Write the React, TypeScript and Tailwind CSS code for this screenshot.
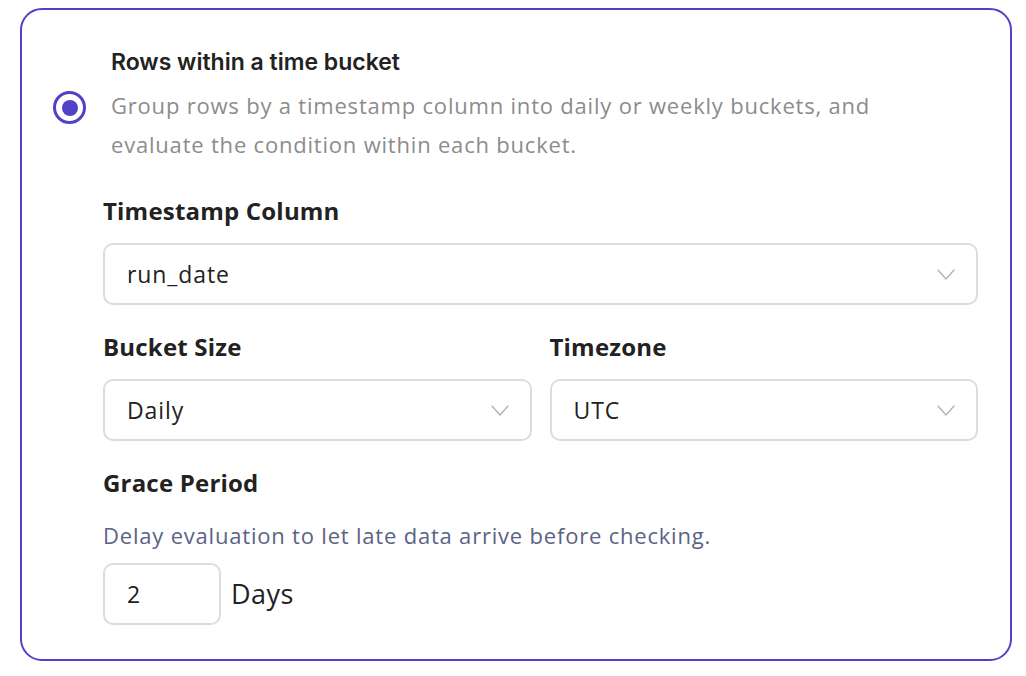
import { useState } from 'react'

function Chevron() {
  return (
    <svg width="18" height="11" viewBox="0 0 18 11" fill="none" className="shrink-0">
      <path d="M1 1l8 9 8-9" stroke="#b3b3b3" strokeWidth="1.4" strokeLinecap="round" strokeLinejoin="round" />
    </svg>
  )
}

function SelectBox({ value }: { value: string }) {
  return (
    <div className="h-[62px] w-full rounded-[10px] border-2 border-[#dcdcdc] bg-white pl-[22px] pr-[21px] flex items-center justify-between">
      <span className="text-[23px] tracking-[0.9px] text-[#222]">{value}</span>
      <Chevron />
    </div>
  )
}

export default function App() {
  const [selected] = useState(true)

  return (
    <div className="min-h-screen bg-white px-[20px] pt-[8px] font-['Open_Sans',sans-serif]">
      <div className="w-[992px] h-[653px] rounded-[22px] border-2 border-[#5140c8] flex">
        {/* Radio */}
        <div className="w-[88px] shrink-0 pl-[31px] pt-[81px]">
          <div className="w-[33px] h-[33px] rounded-full border-[3px] border-[#5140c8] flex items-center justify-center">
            {selected && <div className="w-[16px] h-[16px] rounded-full bg-[#5140c8]" />}
          </div>
        </div>

        <div className="flex-1 pr-[32px]">
          <div className="pl-[1px] pt-[36px]">
            <div className="font-['Inter',sans-serif] font-semibold text-[23px] text-[#222] leading-[32px]">
              Rows within a time bucket
            </div>
            <p className="mt-[8px] text-[22px] tracking-[0.8px] leading-[39px] text-[#8c8c8c]">
              Group rows by a timestamp column into daily or weekly buckets, and
              <br />
              evaluate the condition within each bucket.
            </p>
          </div>

          <div className="-ml-[7px] mt-[32px]">
            <div className="text-[24px] font-bold tracking-[0.2px] text-[#222] leading-[30px]">Timestamp Column</div>
            <div className="mt-[17px]">
              <SelectBox value="run_date" />
            </div>

            <div className="mt-[27px] grid grid-cols-2 gap-[18px]">
              <div>
                <div className="text-[24px] font-bold tracking-[0.2px] text-[#222] leading-[30px]">Bucket Size</div>
                <div className="mt-[17px]">
                  <SelectBox value="Daily" />
                </div>
              </div>
              <div>
                <div className="text-[24px] font-bold tracking-[0.2px] text-[#222] leading-[30px]">Timezone</div>
                <div className="mt-[17px]">
                  <SelectBox value="UTC" />
                </div>
              </div>
            </div>

            <div className="mt-[27px] text-[24px] font-bold tracking-[0.2px] text-[#222] leading-[30px]">Grace Period</div>
            <div className="mt-[22px] text-[22px] tracking-[0.8px] leading-[30px] text-[#5b6385]">
              Delay evaluation to let late data arrive before checking.
            </div>
            <div className="mt-[13px] flex items-center gap-[10px]">
              <div className="w-[118px] h-[62px] rounded-[10px] border-2 border-[#dcdcdc] pl-[22px] flex items-center text-[23px] text-[#222]">
                2
              </div>
              <span className="text-[27px] tracking-[0.5px] text-[#222]">Days</span>
            </div>
          </div>
        </div>
      </div>
    </div>
  )
}
